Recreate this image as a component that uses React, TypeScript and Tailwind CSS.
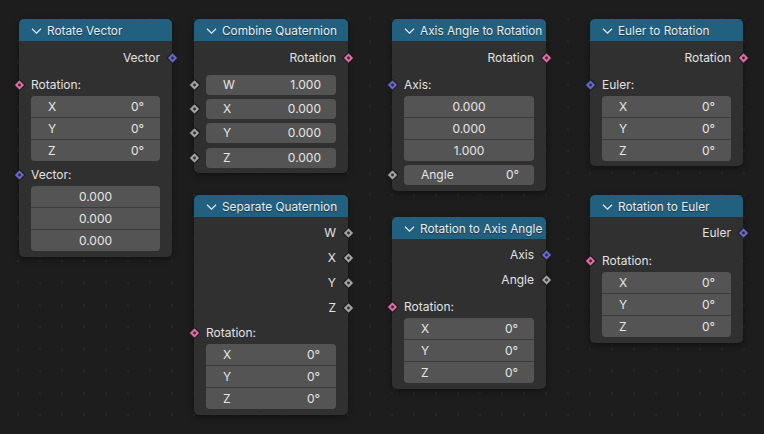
import React from 'react';

const ROT = '#e46aa6';
const VEC = '#6767cf';
const FLT = '#a3a3a3';

type Side = 'left' | 'right';

function Socket({ color, side }: { color: string; side: Side }) {
  return (
    <svg
      width="13"
      height="13"
      viewBox="0 0 13 13"
      className={`absolute top-1/2 -translate-y-1/2 ${side === 'left' ? 'left-[-6.5px]' : 'right-[-6.5px]'}`}
    >
      <path d="M6.5 1 L12 6.5 L6.5 12 L1 6.5 Z" fill={color} stroke="#1e1e1e" strokeWidth="1.1" />
      <circle cx="6.5" cy="6.5" r="1.4" fill="#2b2b2b" />
    </svg>
  );
}

function Header({ title }: { title: string }) {
  return (
    <div className="h-[22px] rounded-t-[5px] bg-[#22607f] flex items-center pl-[12px] text-[#ececec]">
      <svg width="11" height="7" viewBox="0 0 11 7" className="mr-[5px] shrink-0 translate-y-[0.5px]">
        <path d="M1 1.2 L5.5 5.6 L10 1.2" fill="none" stroke="#e8e8e8" strokeWidth="1.2" />
      </svg>
      <span className="text-[11.8px] leading-[22px] translate-y-[0.5px] [text-shadow:0_1px_1px_rgba(0,0,0,0.45)] whitespace-nowrap">{title}</span>
    </div>
  );
}

function OutRow({ label, color, h = 'h-[22px]' }: { label: string; color: string; h?: string }) {
  return (
    <div className={`relative ${h} flex items-center justify-end pr-[12px]`}>
      <span className="text-[12px] text-[#e2e2e2]">{label}</span>
      <Socket color={color} side="right" />
    </div>
  );
}

function LabelRow({ label, color, cls = '' }: { label: string; color: string; cls?: string }) {
  return (
    <div className={`relative h-[20px] flex items-center pl-[12px] ${cls}`}>
      <span className="text-[12px] text-[#e2e2e2]">{label}</span>
      <Socket color={color} side="left" />
    </div>
  );
}

function Group({ rows, centered }: { rows: [string, string][]; centered?: boolean }) {
  return (
    <div className="mx-[12px] mt-[1px] rounded-[4px] overflow-hidden flex flex-col gap-px bg-[#3c3c3c]">
      {rows.map(([l, v], i) => (
        <div
          key={i}
          className={`h-[21px] bg-[#545454] flex items-center text-[12px] text-[#e6e6e6] ${
            centered ? 'justify-center' : 'justify-between pl-[17px] pr-[16px]'
          }`}
        >
          {centered ? <span>{v}</span> : <><span>{l}</span><span>{v}</span></>}
        </div>
      ))}
    </div>
  );
}

function SingleField({ label, value, color, cls = '' }: { label: string; value: string; color: string; cls?: string }) {
  return (
    <div className={`relative h-[20px] px-[12px] ${cls}`}>
      <div className="h-full rounded-[4px] bg-[#545454] flex items-center justify-between pl-[17px] pr-[15px] text-[12px] text-[#e6e6e6]">
        <span>{label}</span>
        <span>{value}</span>
      </div>
      <Socket color={color} side="left" />
    </div>
  );
}

const XYZ0: [string, string][] = [
  ['X', '0°'],
  ['Y', '0°'],
  ['Z', '0°'],
];

function Node({ pos, title, children }: { pos: string; title: string; children: React.ReactNode }) {
  return (
    <div className={`absolute ${pos} rounded-[5px] bg-[#303030] shadow-[0_2px_6px_rgba(0,0,0,0.45)]`}>
      <Header title={title} />
      {children}
    </div>
  );
}

export default function App() {
  return (
    <div
      className="relative w-[764px] h-[434px] overflow-hidden bg-[#1d1d1d] bg-[radial-gradient(circle,#272727_1px,transparent_1.6px)] bg-[length:22px_22px] bg-[position:7px_8px]"
      style={{ fontFamily: 'Inter, "Noto Sans", sans-serif' }}
    >
      {/* Rotate Vector */}
      <Node pos="left-[19px] top-[19px] w-[153px]" title="Rotate Vector">
        <div className="pt-[6px] pb-[6px]">
          <OutRow label="Vector" color={VEC} />
          <LabelRow label="Rotation:" color={ROT} cls="mt-[6px]" />
          <Group rows={XYZ0} />
          <LabelRow label="Vector:" color={VEC} cls="mt-[4px]" />
          <Group rows={[['', '0.000'], ['', '0.000'], ['', '0.000']]} centered />
        </div>
      </Node>

      {/* Combine Quaternion */}
      <Node pos="left-[194px] top-[19px] w-[154px]" title="Combine Quaternion">
        <div className="pt-[6px] pb-[5px] flex flex-col">
          <OutRow label="Rotation" color={ROT} />
          <SingleField label="W" value="1.000" color={FLT} cls="mt-[6px]" />
          <SingleField label="X" value="0.000" color={FLT} cls="mt-[4px]" />
          <SingleField label="Y" value="0.000" color={FLT} cls="mt-[4px]" />
          <SingleField label="Z" value="0.000" color={FLT} cls="mt-[5px]" />
        </div>
      </Node>

      {/* Separate Quaternion */}
      <Node pos="left-[194px] top-[195px] w-[154px]" title="Separate Quaternion">
        <div className="pt-[3px] pb-[6px]">
          <OutRow label="W" color={FLT} h="h-[25px]" />
          <OutRow label="X" color={FLT} h="h-[25px]" />
          <OutRow label="Y" color={FLT} h="h-[25px]" />
          <OutRow label="Z" color={FLT} h="h-[25px]" />
          <LabelRow label="Rotation:" color={ROT} cls="mt-[3px]" />
          <Group rows={XYZ0} />
        </div>
      </Node>

      {/* Axis Angle to Rotation */}
      <Node pos="left-[392px] top-[19px] w-[154px]" title="Axis Angle to Rotation">
        <div className="pt-[6px] pb-[6px]">
          <OutRow label="Rotation" color={ROT} />
          <LabelRow label="Axis:" color={VEC} cls="mt-[6px]" />
          <Group rows={[['', '0.000'], ['', '0.000'], ['', '1.000']]} centered />
          <SingleField label="Angle" value="0°" color={FLT} cls="mt-[4px]" />
        </div>
      </Node>

      {/* Rotation to Axis Angle */}
      <Node pos="left-[392px] top-[217px] w-[154px]" title="Rotation to Axis Angle">
        <div className="pt-[3px] pb-[6px]">
          <OutRow label="Axis" color={VEC} h="h-[25px]" />
          <OutRow label="Angle" color={FLT} h="h-[25px]" />
          <LabelRow label="Rotation:" color={ROT} cls="mt-[5px]" />
          <Group rows={XYZ0} />
        </div>
      </Node>

      {/* Euler to Rotation */}
      <Node pos="left-[590px] top-[19px] w-[153px]" title="Euler to Rotation">
        <div className="pt-[6px] pb-[5px]">
          <OutRow label="Rotation" color={ROT} />
          <LabelRow label="Euler:" color={VEC} cls="mt-[6px]" />
          <Group rows={XYZ0} />
        </div>
      </Node>

      {/* Rotation to Euler */}
      <Node pos="left-[590px] top-[195px] w-[153px]" title="Rotation to Euler">
        <div className="pt-[5px] pb-[6px]">
          <OutRow label="Euler" color={VEC} />
          <LabelRow label="Rotation:" color={ROT} cls="mt-[7px]" />
          <Group rows={XYZ0} />
        </div>
      </Node>
    </div>
  );
}
